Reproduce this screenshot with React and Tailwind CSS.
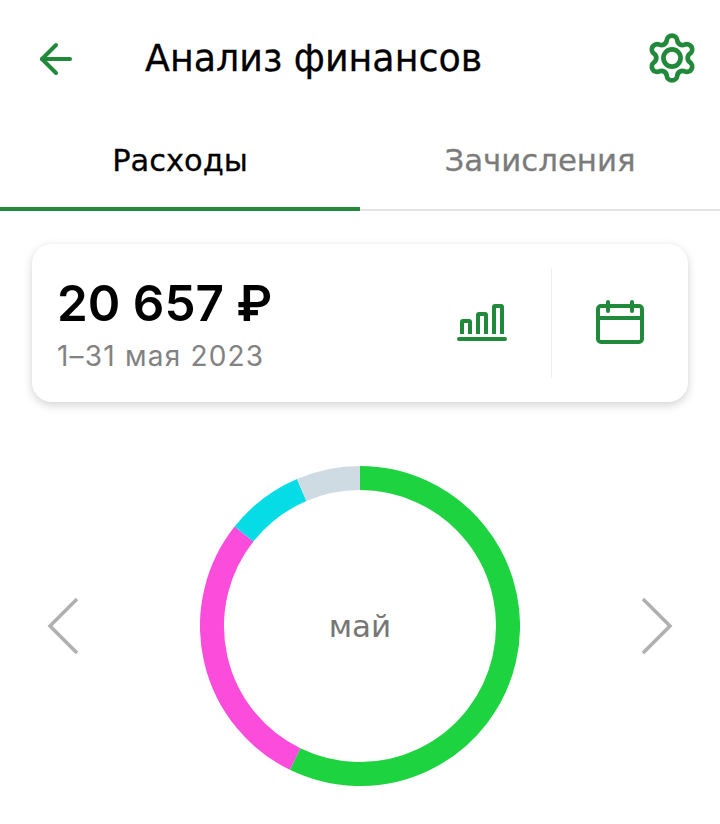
import { ArrowLeft } from "lucide-react";

const GREEN = "#21893a";

// donut segments, in degrees clockwise from 12 o'clock
const segments = [
  { color: "#1dd33f", from: 0, to: 206 },
  { color: "#fc4cdc", from: 206, to: 308.4 },
  { color: "#05dce6", from: 308.4, to: 336.8 },
  { color: "#cfdbe3", from: 336.8, to: 360 },
];

function arc(from, to) {
  const r = 148;
  const c = 160;
  const p = (deg) => {
    const a = (deg * Math.PI) / 180;
    return `${c + r * Math.sin(a)} ${c - r * Math.cos(a)}`;
  };
  return `M ${p(from)} A ${r} ${r} 0 ${to - from > 180 ? 1 : 0} 1 ${p(to)}`;
}

function Donut() {
  return (
    <div className="relative w-[320px] h-[320px]">
      <svg width="320" height="320" viewBox="0 0 320 320" fill="none">
        {segments.map((s) => (
          <path key={s.color} d={arc(s.from, s.to)} stroke={s.color} strokeWidth="24" />
        ))}
      </svg>
      <div className="absolute inset-0 flex items-center justify-center text-[31px] leading-none text-[#767676]">
        май
      </div>
    </div>
  );
}

function Gear() {
  return (
    <svg width="54" height="54" viewBox="0 0 24 24" fill="none" stroke={GREEN} strokeWidth="2.1" strokeLinecap="round" strokeLinejoin="round" className="-mt-[4px]">
      <path d="M9.671 4.136a2.34 2.34 0 0 1 4.659 0 2.34 2.34 0 0 0 3.319 1.915 2.34 2.34 0 0 1 2.33 4.033 2.34 2.34 0 0 0 0 3.831 2.34 2.34 0 0 1-2.33 4.033 2.34 2.34 0 0 0-3.319 1.915 2.34 2.34 0 0 1-4.659 0 2.34 2.34 0 0 0-3.32-1.915 2.34 2.34 0 0 1-2.33-4.033 2.34 2.34 0 0 0 0-3.831A2.34 2.34 0 0 1 6.35 6.051a2.34 2.34 0 0 0 3.32-1.915" />
      <circle cx="12" cy="12" r="3.800" />
    </svg>
  );
}

export default function App() {
  return (
    <div className="w-[720px] h-[824px] bg-white overflow-hidden font-['DejaVu_Sans',sans-serif]">
      <header className="h-[120px] flex items-center pl-[32px] pr-[21px]">
        <ArrowLeft size={48} color={GREEN} strokeWidth={2} className="-mt-[2px]" />
        <h1 className="ml-[65px] text-[36.400px] leading-none text-black flex-1 -mt-[1px] [-webkit-text-stroke:0.3px_black]">Анализ финансов</h1>
        <Gear />
      </header>

      <nav className="flex h-[91px] border-b-2 border-[#e4e4e4]">
        <div className="w-1/2 flex items-center justify-center pb-[6px] text-[30.500px] text-black border-b-4 border-[#21893a] -mb-[2px] [-webkit-text-stroke:0.3px_black]">
          Расходы
        </div>
        <div className="w-1/2 flex items-center justify-center pb-[8px] text-[30.800px] text-[#7b7b7b] [-webkit-text-stroke:0.3px_#7b7b7b]">
          Зачисления
        </div>
      </nav>

      <section className="mx-[32px] mt-[33px] h-[158px] bg-white rounded-[20px] shadow-[0_3px_10px_rgba(0,0,0,0.18)] flex items-center">
        <div className="flex-1 pl-[25px] pt-[3px] font-['Inter',sans-serif]">
          <div className="text-[49.400px] leading-[56px] font-semibold text-black">20 657 ₽</div>
          <div className="mt-[7px] text-[28px] leading-[36px] tracking-[1.2px] text-[#828282]">1–31 мая 2023</div>
        </div>
        <svg width="50" height="40" viewBox="0 0 50 40" fill="none" stroke={GREEN} strokeWidth="4" strokeLinecap="round" className="mr-[44px]">
          <path d="M5 31V19a1 1 0 0 1 1-1h6a1 1 0 0 1 1 1v12" strokeLinecap="butt" />
          <path d="M21 31V12a1 1 0 0 1 1-1h6a1 1 0 0 1 1 1v19" strokeLinecap="butt" />
          <path d="M37 31V4a1 1 0 0 1 1-1h6a1 1 0 0 1 1 1v27" strokeLinecap="butt" />
          <path d="M2 36h46" />
        </svg>
        <div className="w-px h-[110px] bg-[#eeeeee]"></div>
        <div className="w-[136px] flex justify-center">
          <svg width="50" height="46" viewBox="0 0 50 46" fill="none" stroke={GREEN} strokeWidth="4" strokeLinecap="round">
            <rect x="3" y="6" width="44" height="36" rx="3" />
            <path d="M3 18h44" />
            <path d="M13 2v9M37 2v9" />
          </svg>
        </div>
      </section>

      <section className="mt-[64px] flex items-center justify-between pl-[44px] pr-[44px]">
        <svg width="38" height="60" viewBox="0 0 38 60" fill="none" stroke="#b0b0b0" strokeWidth="3.500">
          <path d="M33 3 L6 30 L33 57" />
        </svg>
        <Donut />
        <svg width="38" height="60" viewBox="0 0 38 60" fill="none" stroke="#b0b0b0" strokeWidth="3.500">
          <path d="M5 3 L32 30 L5 57" />
        </svg>
      </section>
    </div>
  );
}
